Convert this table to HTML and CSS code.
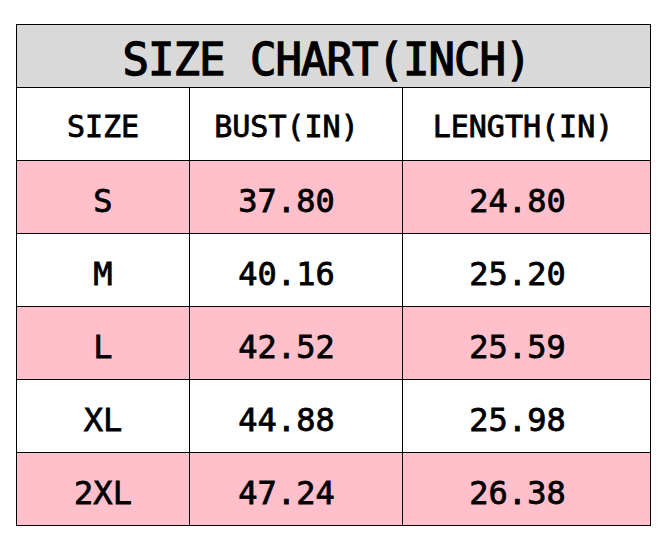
FILE: index.html
```html
<!DOCTYPE html>
<html>
<head>
<meta charset="utf-8">
<link rel="stylesheet" href="styles.css">
</head>
<body>
<div class="chart">
  <div class="cell title">SIZE CHART(INCH)</div>
  <div class="cell head">SIZE</div>
  <div class="cell head c2">BUST(IN)</div>
  <div class="cell head c3h">LENGTH(IN)</div>
  <div class="cell pink">S</div><div class="cell pink c2">37.80</div><div class="cell pink c3">24.80</div>
  <div class="cell">M</div><div class="cell c2">40.16</div><div class="cell c3">25.20</div>
  <div class="cell pink">L</div><div class="cell pink c2">42.52</div><div class="cell pink c3">25.59</div>
  <div class="cell">XL</div><div class="cell c2">44.88</div><div class="cell c3">25.98</div>
  <div class="cell pink">2XL</div><div class="cell pink c2">47.24</div><div class="cell pink c3">26.38</div>
</div>
</body>
</html>
```
FILE: styles.css
```css
html, body {
  margin: 0;
  padding: 0;
  background: #ffffff;
}
body {
  padding: 24px 0 0 16px;
  font-family: "DejaVu Sans Mono", monospace;
  color: #000;
}
.chart {
  display: grid;
  grid-template-columns: 173px 213px 248px;
  grid-template-rows: 63px repeat(6, 73px);
  width: 635px;
  box-sizing: border-box;
  border-left: 1px solid #000;
  border-top: 1px solid #000;
}
.cell {
  border-right: 1px solid #000;
  border-bottom: 1px solid #000;
  display: flex;
  align-items: center;
  justify-content: center;
  font-size: 32px;
  font-weight: normal;
  -webkit-text-stroke: 0.8px #000;
  padding-top: 7px;
  box-sizing: border-box;
}
.head {
  font-size: 30px;
  padding-top: 4px;
}
.c2 {
  padding-right: 19px;
}
.c3 {
  padding-right: 18px;
}
.c3h {
  padding-right: 7px;
}
.title {
  grid-column: 1 / 4;
  background: #d9d9d9;
  font-size: 44px;
  -webkit-text-stroke: 1.3px #000;
  letter-spacing: -1px;
  padding-top: 6px;
  padding-right: 14px;
}
.pink {
  background: #ffc0cb;
}
```
